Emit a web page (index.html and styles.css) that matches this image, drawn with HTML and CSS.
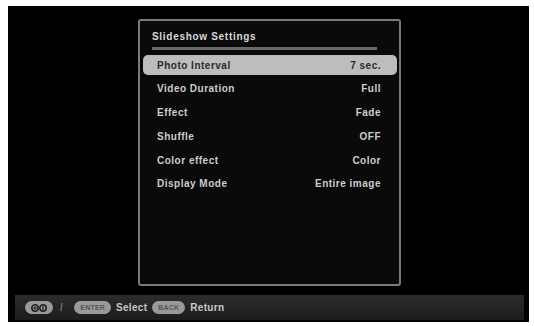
FILE: index.html
```html
<!DOCTYPE html>
<html>
<head>
<meta charset="utf-8">
<link rel="stylesheet" href="styles.css">
</head>
<body>
<div class="screen">
  <div class="panel">
    <div class="title">Slideshow Settings</div>
    <div class="rule"></div>
    <div class="rows">
      <div class="row active"><span>Photo Interval</span><span>7 sec.</span></div>
      <div class="row"><span>Video Duration</span><span>Full</span></div>
      <div class="row"><span>Effect</span><span>Fade</span></div>
      <div class="row"><span>Shuffle</span><span>OFF</span></div>
      <div class="row"><span>Color effect</span><span>Color</span></div>
      <div class="row"><span>Display Mode</span><span>Entire image</span></div>
    </div>
  </div>
  <div class="bar">
    <span class="pill nav"><svg width="22" height="10" viewBox="0 0 22 10"><circle cx="7" cy="5" r="3.2" fill="none" stroke="#222" stroke-width="1.6"/><path d="M7 3v4M5 5h4" stroke="#222" stroke-width="1"/><circle cx="15" cy="5" r="3.2" fill="none" stroke="#222" stroke-width="1.6"/><path d="M15 2.5v5" stroke="#222" stroke-width="1.2"/></svg></span>
    <span class="slash">/</span>
    <span class="pill">ENTER</span>
    <span class="lbl">Select</span>
    <span class="pill">BACK</span>
    <span class="lbl">Return</span>
  </div>
</div>
</body>
</html>
```
FILE: styles.css
```css
html, body {
  margin: 0;
  padding: 0;
  background: #fff;
}
body {
  width: 534px;
  height: 326px;
  overflow: hidden;
}
.screen {
  margin: 6px 0 0 8px;
  width: 521px;
  height: 316px;
  background: #000;
  display: flex;
  flex-direction: column;
  font-family: "Liberation Sans", Arial, sans-serif;
  font-weight: bold;
  color: #cfcfcf;
  font-size: 10px;
  letter-spacing: 0.5px;
}
.panel {
  margin: 13px 0 0 130px;
  width: 263px;
  height: 267px;
  box-sizing: border-box;
  border: 2px solid #7a7a7a;
  border-radius: 3px;
  background: #0a0a0a;
  display: flex;
  flex-direction: column;
}
.title {
  margin: 10px 0 0 12px;
  height: 12px;
  line-height: 12px;
  font-size: 10px;
  letter-spacing: 0.7px;
  color: #d8d8d8;
}
.rule {
  margin: 4px 0 0 12px;
  width: 225px;
  height: 3px;
  background: #6a6a6a;
}
.rows {
  margin: 5px 0 0 3px;
  width: 254px;
  display: flex;
  flex-direction: column;
  gap: 3.8px;
}
.row {
  height: 20px;
  display: flex;
  align-items: center;
  justify-content: space-between;
  padding: 0 16px 0 14px;
  border-radius: 5px;
  color: #cdcdcd;
}
.row.active {
  background: #bdbdbd;
  color: #2a2a2a;
}
.bar {
  margin: 9px 0 0 7px;
  width: 509px;
  height: 25px;
  background: linear-gradient(#2c2c2c, #1c1c1c);
  display: flex;
  align-items: center;
  padding-left: 10px;
  box-sizing: border-box;
  gap: 5px;
  color: #c8c8c8;
}
.pill {
  display: inline-flex;
  align-items: center;
  justify-content: center;
  height: 13px;
  padding: 0 6px;
  border-radius: 7px;
  background: #9a9a9a;
  color: #555;
  font-size: 7px;
  letter-spacing: 0.2px;
}
.pill.nav {
  padding: 0 3px;
}
.slash {
  margin: 0 6px 0 2px;
  color: #777;
}
.lbl {
  font-size: 10px;
  letter-spacing: 0.3px;
}
```
